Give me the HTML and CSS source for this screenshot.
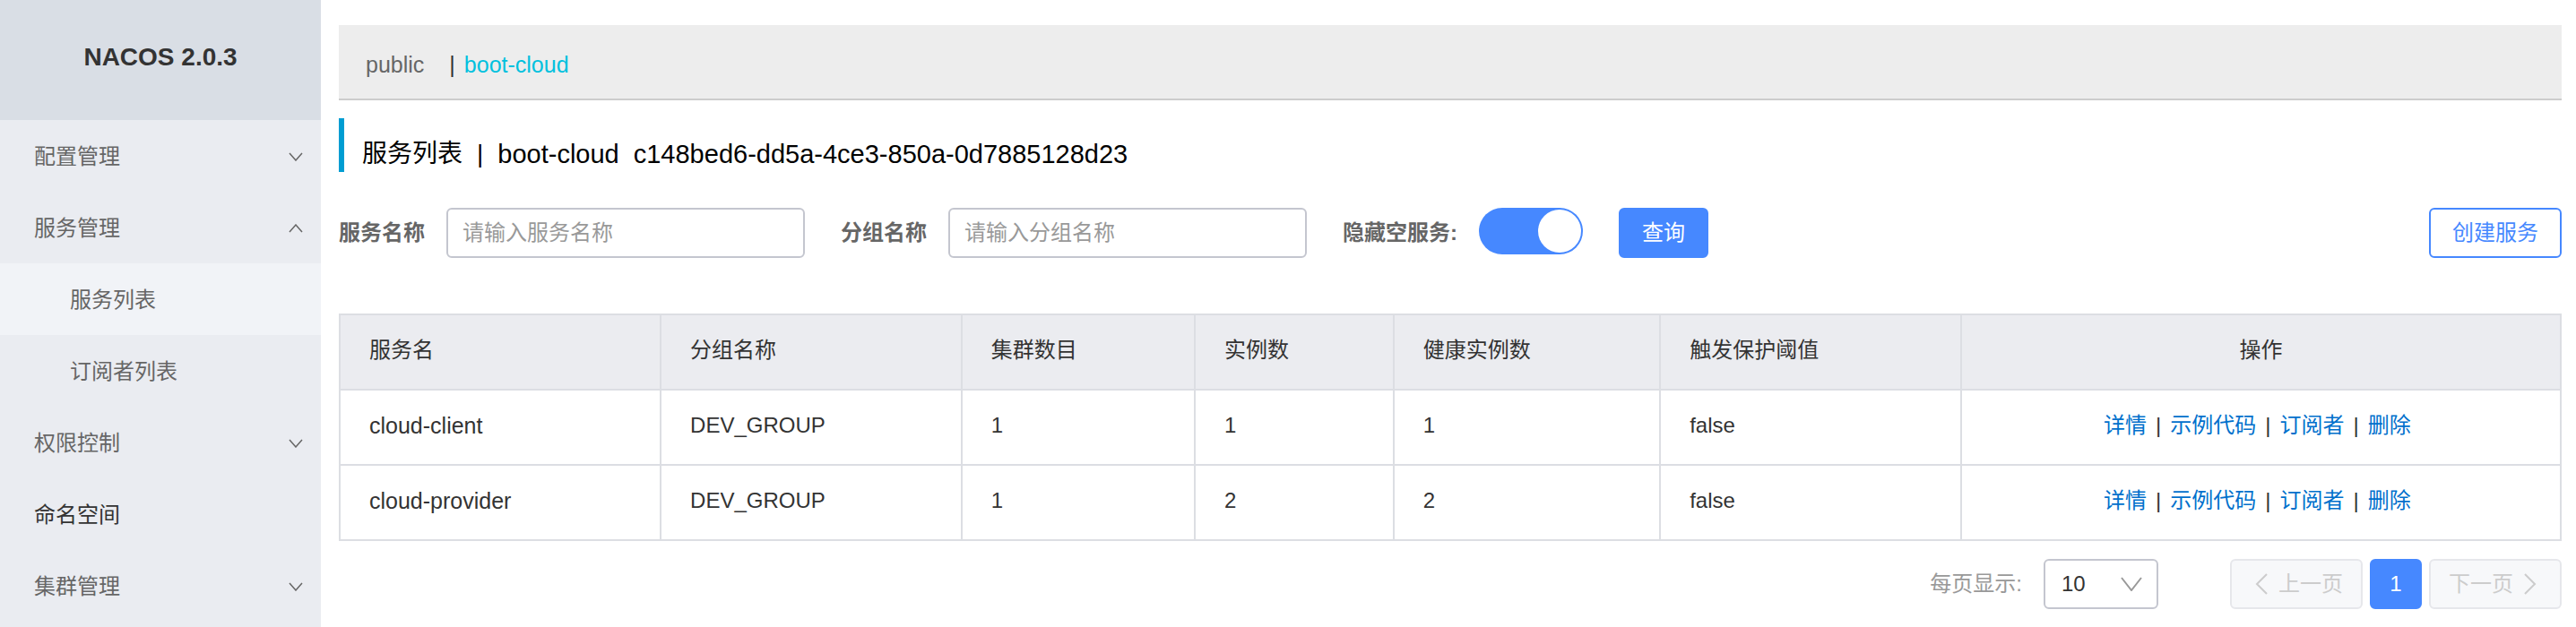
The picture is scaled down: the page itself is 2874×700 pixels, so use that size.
FILE: index.html
```html
<!DOCTYPE html>
<html lang="zh-CN">
<head>
<meta charset="utf-8">
<meta name="viewport" content="width=device-width, initial-scale=1">
<title>Nacos</title>
<link rel="stylesheet" href="styles.css">
</head>
<body>
<div class="layout">
  <aside class="sidebar">
    <h1 class="brand">NACOS 2.0.3</h1>
    <nav class="menu">
      <button class="menu-item" type="button" aria-expanded="false">配置管理
        <svg class="arrow" viewBox="0 0 16 10"><path d="M1 1l7 8 7-8"/></svg></button>
      <button class="menu-item" type="button" aria-expanded="true">服务管理
        <svg class="arrow" viewBox="0 0 16 10"><path d="M1 9l7-8 7 8"/></svg></button>
      <a class="menu-item sub active" href="#services">服务列表</a>
      <a class="menu-item sub" href="#subscribers">订阅者列表</a>
      <button class="menu-item" type="button" aria-expanded="false">权限控制
        <svg class="arrow" viewBox="0 0 16 10"><path d="M1 1l7 8 7-8"/></svg></button>
      <a class="menu-item single" href="#namespace">命名空间</a>
      <button class="menu-item" type="button" aria-expanded="false">集群管理
        <svg class="arrow" viewBox="0 0 16 10"><path d="M1 1l7 8 7-8"/></svg></button>
    </nav>
  </aside>

  <main class="content">
    <div class="namespaces">
      <a class="namespace" href="#public">public</a>
      <span class="divider">|</span>
      <a class="namespace current" href="#boot-cloud">boot-cloud</a>
    </div>

    <h2 class="title"><span>服务列表</span><span>|</span><span class="title-id">boot-cloud</span><span class="title-id">c148bed6-dd5a-4ce3-850a-0d7885128d23</span></h2>

    <form class="filters">
      <div class="field">
        <label for="service">服务名称</label>
        <input class="text-input" id="service" type="text" placeholder="请输入服务名称">
      </div>
      <div class="field">
        <label for="group">分组名称</label>
        <input class="text-input" id="group" type="text" placeholder="请输入分组名称">
      </div>
      <div class="field">
        <label for="hide-empty">隐藏空服务:</label>
        <input class="switch" id="hide-empty" type="checkbox" role="switch" checked>
      </div>
      <button class="button primary" type="button">查询</button>
      <button class="button outline" type="button">创建服务</button>
    </form>

    <table class="services">
      <colgroup>
        <col class="col-name"><col class="col-group"><col class="col-cluster"><col class="col-instance"><col class="col-healthy"><col class="col-threshold"><col>
      </colgroup>
      <thead>
        <tr><th>服务名</th><th>分组名称</th><th>集群数目</th><th>实例数</th><th>健康实例数</th><th>触发保护阈值</th><th class="center">操作</th></tr>
      </thead>
      <tbody>
        <tr>
          <td class="name">cloud-client</td><td>DEV_GROUP</td><td>1</td><td>1</td><td>1</td><td>false</td>
          <td class="actions"><a href="#detail">详情</a><span>|</span><a href="#code">示例代码</a><span>|</span><a href="#sub">订阅者</a><span>|</span><a href="#delete">删除</a></td>
        </tr>
        <tr>
          <td class="name">cloud-provider</td><td>DEV_GROUP</td><td>1</td><td>2</td><td>2</td><td>false</td>
          <td class="actions"><a href="#detail">详情</a><span>|</span><a href="#code">示例代码</a><span>|</span><a href="#sub">订阅者</a><span>|</span><a href="#delete">删除</a></td>
        </tr>
      </tbody>
    </table>

    <div class="pagination">
      <label class="size-label" for="page-size">每页显示:</label>
      <div class="select-box">
        <select id="page-size"><option>10</option><option>20</option><option>30</option></select>
        <svg class="select-arrow" viewBox="0 0 24 16"><path d="M1 1l11 14L23 1"/></svg>
      </div>
      <div class="pages">
        <button class="page prev" type="button" disabled><svg class="page-arrow" viewBox="0 0 14 24"><path d="M13 1L2 12l11 11"/></svg>上一页</button>
        <button class="page current" type="button" aria-current="page">1</button>
        <button class="page next" type="button" disabled>下一页<svg class="page-arrow" viewBox="0 0 14 24"><path d="M1 1l11 11L1 23"/></svg></button>
      </div>
    </div>
  </main>
</div>
</body>
</html>
```

FILE: styles.css
```css
* {
  box-sizing: border-box;
}

body {
  margin: 0;
  background: #fff;
  color: #333;
  font: 24px/32px "Liberation Sans", "Noto Sans CJK SC", sans-serif;
}

button,
input,
select {
  margin: 0;
  font: inherit;
}

a {
  color: #0070cc;
  text-decoration: none;
}

svg {
  fill: none;
  stroke: currentColor;
  stroke-width: 2;
}

.layout {
  display: flex;
  min-height: 100vh;
}

/* Sidebar */
.sidebar {
  flex: 0 0 358px;
  background: #eaecf1;
}

.brand {
  margin: 0;
  padding: 48px 0 54px;
  background: #d9dee5;
  font-size: 28px;
  line-height: 32px;
  text-align: center;
}

.menu {
  display: flex;
  flex-direction: column;
}

.menu-item {
  display: flex;
  align-items: center;
  justify-content: space-between;
  height: 80px;
  padding: 2px 20px 0 38px;
  border: 0;
  background: none;
  color: #666;
  text-align: left;
}

.menu-item.sub {
  padding-left: 78px;
}

.menu-item.active {
  background: #f1f3f7;
}

.menu-item.single {
  color: #333;
}

.arrow {
  width: 16px;
  height: 10px;
  stroke-width: 1.5;
}

/* Content */
.content {
  flex: 1;
  min-width: 0;
  padding: 28px 16px 20px 20px;
}

.namespaces {
  display: flex;
  align-items: center;
  height: 84px;
  padding: 6px 30px 0;
  border-bottom: 2px solid #ccc;
  background: #ededed;
  font-size: 25px;
}

.namespace {
  color: #666;
}

.namespace.current {
  color: #00c1de;
}

.divider {
  margin: 0 10px 0 28px;
}

.title {
  display: flex;
  gap: 16px;
  margin: 20px 0 40px;
  padding: 20px 0 0 20px;
  border-left: 6px solid #009dd2;
  color: #000;
  font-size: 28px;
  font-weight: 400;
  line-height: 40px;
}

.title-id {
  font-size: 29px;
}

.filters {
  display: flex;
  align-items: flex-start;
  gap: 40px;
  margin-bottom: 62px;
}

.field {
  display: flex;
  gap: 24px;
}

.field label {
  color: #666;
  font-weight: 700;
  line-height: 56px;
}

.text-input {
  width: 400px;
  height: 56px;
  padding: 0 16px;
  border: 2px solid #c4c6cf;
  border-radius: 6px;
  background: #fff;
  color: #333;
}

.text-input::placeholder {
  color: #999;
}

.switch {
  display: flex;
  justify-content: flex-end;
  width: 116px;
  height: 52px;
  padding: 2px;
  border-radius: 26px;
  background: #4688ff;
  appearance: none;
}

.switch::before {
  width: 48px;
  height: 48px;
  border-radius: 50%;
  background: #fff;
  content: "";
}

.button {
  height: 56px;
  padding: 0 24px;
  border: 2px solid #4688ff;
  border-radius: 6px;
}

.button.primary {
  background: #4688ff;
  color: #fff;
}

.button.outline {
  margin-left: auto;
  background: #fff;
  color: #4688ff;
}

/* Table */
.services {
  width: 100%;
  border-collapse: collapse;
  table-layout: fixed;
}

.col-name { width: 14.45%; }
.col-group { width: 13.55%; }
.col-cluster { width: 10.5%; }
.col-instance { width: 8.95%; }
.col-healthy { width: 12%; }
.col-threshold { width: 13.55%; }

.services th,
.services td {
  height: 84px;
  padding: 0 32px 4px;
  border: 2px solid #dcdee3;
  font-weight: 400;
  text-align: left;
}

.services th {
  background: #ebecf0;
}

.services th.center {
  text-align: center;
}

.services td.name {
  font-size: 25px;
}

.services td.actions {
  padding-right: 40px;
  text-align: center;
}

.actions span {
  margin: 0 10px;
}

/* Pagination */
.pagination {
  display: flex;
  align-items: center;
  justify-content: flex-end;
  margin-top: 20px;
}

.size-label {
  margin-right: 24px;
  color: #999;
}

.select-box {
  display: grid;
  align-items: center;
  width: 128px;
  margin-right: 80px;
}

.select-box select {
  grid-area: 1 / 1;
  height: 56px;
  padding: 0 18px;
  border: 2px solid #c4c6cf;
  border-radius: 6px;
  background: #fff;
  color: #333;
  appearance: none;
}

.select-arrow {
  grid-area: 1 / 1;
  justify-self: end;
  width: 24px;
  height: 16px;
  margin-right: 18px;
  color: #999;
  pointer-events: none;
}

.pages {
  display: flex;
  gap: 8px;
}

.page {
  display: flex;
  align-items: center;
  justify-content: center;
  gap: 12px;
  min-width: 58px;
  height: 56px;
  padding: 0;
  border: 2px solid #e6e7eb;
  border-radius: 6px;
  background: #f7f8fa;
  color: #ccc;
}

.page.prev {
  padding: 0 20px 0 26px;
}

.page.next {
  padding: 0 26px 0 20px;
}

.page.current {
  border-color: #4688ff;
  background: #4688ff;
  color: #fff;
}

.page-arrow {
  width: 14px;
  height: 24px;
}
```
